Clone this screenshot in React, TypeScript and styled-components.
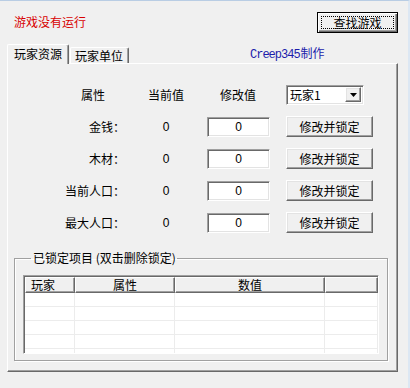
import React from "react";
import styled, { createGlobalStyle } from "styled-components";

const GlobalStyle = createGlobalStyle`
  html, body {
    margin: 0;
    padding: 0;
    background: #f0f0f0;
  }
  body {
    font-family: "Noto Sans CJK SC", "Liberation Sans", sans-serif;
    font-size: 12px;
    color: #000;
  }
`;

const rows = [
  { label: "金钱：", current: "0", value: "0" },
  { label: "木材：", current: "0", value: "0" },
  { label: "当前人口：", current: "0", value: "0" },
  { label: "最大人口：", current: "0", value: "0" },
];

const columns = ["玩家", "属性", "数值", ""];

const App = () => {
  return (
    <Window>
      <GlobalStyle />
      <TopBar>
        <Status>游戏没有运行</Status>
        <DefaultButton>
          <FocusRect>查找游戏</FocusRect>
        </DefaultButton>
      </TopBar>

      <TabStrip>
        <Tab active>玩家资源</Tab>
        <Tab>玩家单位</Tab>
        <Credit>
          Creep345<span>制作</span>
        </Credit>
      </TabStrip>

      <Panel>
        <FormGrid>
          <HeadCell $pad={21}>属性</HeadCell>
          <HeadCell $center>当前值</HeadCell>
          <HeadCell $narrow>修改值</HeadCell>
          <Combo>
            <ComboText>玩家1</ComboText>
            <ComboArrow>
              <svg width="7" height="4" viewBox="0 0 7 4">
                <polygon points="0,0 7,0 3.5,4" fill="#000" />
              </svg>
            </ComboArrow>
          </Combo>

          {rows.map((r) => (
            <React.Fragment key={r.label}>
              <RowLabel>{r.label}</RowLabel>
              <Current>{r.current}</Current>
              <ValueInput defaultValue={r.value} />
              <Button>修改并锁定</Button>
            </React.Fragment>
          ))}
        </FormGrid>

        <GroupBox>
          <Legend>已锁定项目 (双击删除锁定)</Legend>
          <ListView>
            <ListHeader>
              {columns.map((c, i) => (
                <HeaderCell key={i} $left={i === 0}>
                  {c}
                </HeaderCell>
              ))}
            </ListHeader>
            {[0, 1, 2, 3, 4].map((n) => (
              <ListRow key={n}>
                <ListCell />
                <ListCell />
                <ListCell />
                <ListCell />
              </ListRow>
            ))}
          </ListView>
        </GroupBox>
      </Panel>
    </Window>
  );
};

const Window = styled.div`
  width: 410px;
  height: 388px;
  box-sizing: border-box;
  border-top: 1px solid #b9cde4;
  border-right: 2px solid #dce7f3;
  background: #f0f0f0;
  overflow: hidden;
`;

const TopBar = styled.div`
  display: flex;
  align-items: center;
  justify-content: space-between;
  height: 21px;
  padding: 11px 10px 0 14px;
`;

const Status = styled.div`
  color: #d80000;
  line-height: 14px;
  margin-top: -2px;
`;

const classicRaised = `
  background: #f0f0f0;
  border: 1px solid;
  border-color: #ffffff #696969 #696969 #ffffff;
  box-shadow: inset -1px -1px 0 #a0a0a0, inset 1px 1px 0 #e3e3e3;
`;

const DefaultButton = styled.button`
  width: 81px;
  height: 21px;
  padding: 0;
  box-sizing: border-box;
  border: 1px solid #000;
  background: #f0f0f0;
  box-shadow: inset 1px 1px 0 #fff, inset -1px -1px 0 #696969, inset -2px -2px 0 #a0a0a0;
  font: inherit;
  display: flex;
  align-items: stretch;
  justify-content: stretch;
`;

const FocusRect = styled.span`
  flex: 1;
  margin: 3px;
  border: 1px dotted #000;
  display: flex;
  align-items: center;
  justify-content: center;
  line-height: 12px;
`;

const TabStrip = styled.div`
  display: flex;
  align-items: flex-end;
  height: 19px;
  margin-top: 11px;
  padding-left: 7px;
  position: relative;
  z-index: 1;
`;

const Tab = styled.div<{ active?: boolean }>`
  box-sizing: border-box;
  width: ${(p) => (p.active ? "62px" : "59px")};
  height: ${(p) => (p.active ? "20px" : "16px")};
  margin-bottom: ${(p) => (p.active ? "-1px" : "0")};
  margin-left: ${(p) => (p.active ? "0" : "1px")};
  background: #f0f0f0;
  border-top: 1px solid #fff;
  border-left: 1px solid #fff;
  border-right: 1px solid #696969;
  box-shadow: inset -1px 0 0 #a0a0a0;
  border-radius: 2px 2px 0 0;
  display: flex;
  align-items: ${(p) => (p.active ? "flex-start" : "center")};
  padding-top: ${(p) => (p.active ? "2px" : "0")};
  padding-left: ${(p) => (p.active ? "6px" : "4px")};
  line-height: 14px;
  font-size: 12px;
`;

const Credit = styled.div`
  margin-left: 121px;
  align-self: flex-start;
  margin-top: 2px;
  color: #1c1cab;
  font-family: "Liberation Mono", monospace;
  font-size: 12px;
  letter-spacing: -1px;
  line-height: 14px;

  span {
    font-family: "Noto Sans CJK SC", sans-serif;
    font-size: 12px;
    letter-spacing: 0;
    margin-left: 1px;
  }
`;

const Panel = styled.div`
  width: 391px;
  height: 309px;
  box-sizing: border-box;
  margin-left: 7px;
  border-top: 1px solid #fff;
  border-left: 1px solid #fff;
  border-right: 1px solid #696969;
  border-bottom: 1px solid #696969;
  box-shadow: inset -1px -1px 0 #a0a0a0;
  padding-top: 20px;
`;

const FormGrid = styled.div`
  display: grid;
  grid-template-columns: 118px 80px 80px 100px;
  grid-auto-rows: 21px;
  row-gap: 11px;
  align-items: center;
`;

const HeadCell = styled.div<{ $pad?: number; $center?: boolean; $narrow?: boolean }>`
  text-align: ${(p) => (p.$pad ? "right" : "center")};
  padding-right: ${(p) => (p.$pad ? `${p.$pad}px` : "0")};
  width: ${(p) => (p.$narrow ? "64px" : "auto")};
  font-size: 12px;
`;

const Combo = styled.div`
  width: 78px;
  height: 20px;
  box-sizing: border-box;
  background: #fff;
  border: 1px solid;
  border-color: #a0a0a0 #fff #fff #a0a0a0;
  box-shadow: inset 1px 1px 0 #696969, inset -1px -1px 0 #e3e3e3;
  display: flex;
  align-items: center;
  padding: 2px 2px 2px 3px;
`;

const ComboText = styled.span`
  flex: 1;
  font-family: "Noto Sans CJK SC", "Liberation Sans", sans-serif;
  font-size: 12px;
  line-height: 14px;
`;

const ComboArrow = styled.span`
  width: 16px;
  height: 15px;
  box-sizing: border-box;
  ${classicRaised}
  display: flex;
  align-items: center;
  justify-content: center;
`;

const RowLabel = styled.div`
  text-align: right;
  padding-right: 1px;
  font-size: 12px;
`;

const Current = styled.div`
  text-align: center;
  font-family: "Liberation Sans", sans-serif;
  font-size: 12px;
`;

const ValueInput = styled.input`
  width: 63px;
  height: 20px;
  box-sizing: border-box;
  margin: 0 0 0 1px;
  padding: 0;
  text-align: center;
  font-family: "Liberation Sans", sans-serif;
  font-size: 12px;
  background: #fff;
  border: 1px solid;
  border-color: #a0a0a0 #fff #fff #a0a0a0;
  box-shadow: inset 1px 1px 0 #696969, inset -1px -1px 0 #e3e3e3;
  outline: none;
`;

const Button = styled.button`
  width: 87px;
  height: 21px;
  box-sizing: border-box;
  padding: 0;
  ${classicRaised}
  font: inherit;
  font-size: 12px;
  line-height: 14px;
`;

const GroupBox = styled.fieldset`
  margin: 17px 9px 0 6px;
  padding: 0 8px 7px 8px;
  border: 1px solid #a0a0a0;
  box-shadow: inset 1px 1px 0 #fff, 1px 1px 0 #fff;
  height: 111px;
  box-sizing: border-box;
`;

const Legend = styled.legend`
  margin-left: 8px;
  padding: 0 1px 0 2px;
  font-size: 12px;
  line-height: 16px;
`;

const ListView = styled.div`
  margin-top: 9px;
  height: 79px;
  box-sizing: border-box;
  background: #fff;
  border: 1px solid;
  border-color: #a0a0a0 #fff #fff #a0a0a0;
  box-shadow: inset 1px 1px 0 #696969;
  padding: 1px 0 0 1px;
  overflow: hidden;
`;

const gridCols = "50px 100px 150px 1fr";

const ListHeader = styled.div`
  display: grid;
  grid-template-columns: ${gridCols};
  height: 16px;
`;

const HeaderCell = styled.div<{ $left?: boolean }>`
  box-sizing: border-box;
  background: #f0f0f0;
  border-top: 1px solid #fff;
  border-left: 1px solid #fff;
  border-right: 1px solid #696969;
  border-bottom: 1px solid #696969;
  box-shadow: inset -1px -1px 0 #a0a0a0;
  text-align: ${(p) => (p.$left ? "left" : "center")};
  padding-left: ${(p) => (p.$left ? "5px" : "0")};
  font-size: 12px;
  line-height: 14px;
`;

const ListRow = styled.div`
  display: grid;
  grid-template-columns: ${gridCols};
  height: 14px;
  border-bottom: 1px solid #ececec;
  box-sizing: border-box;
`;

const ListCell = styled.div`
  border-right: 1px solid #ececec;
`;

export default App;
